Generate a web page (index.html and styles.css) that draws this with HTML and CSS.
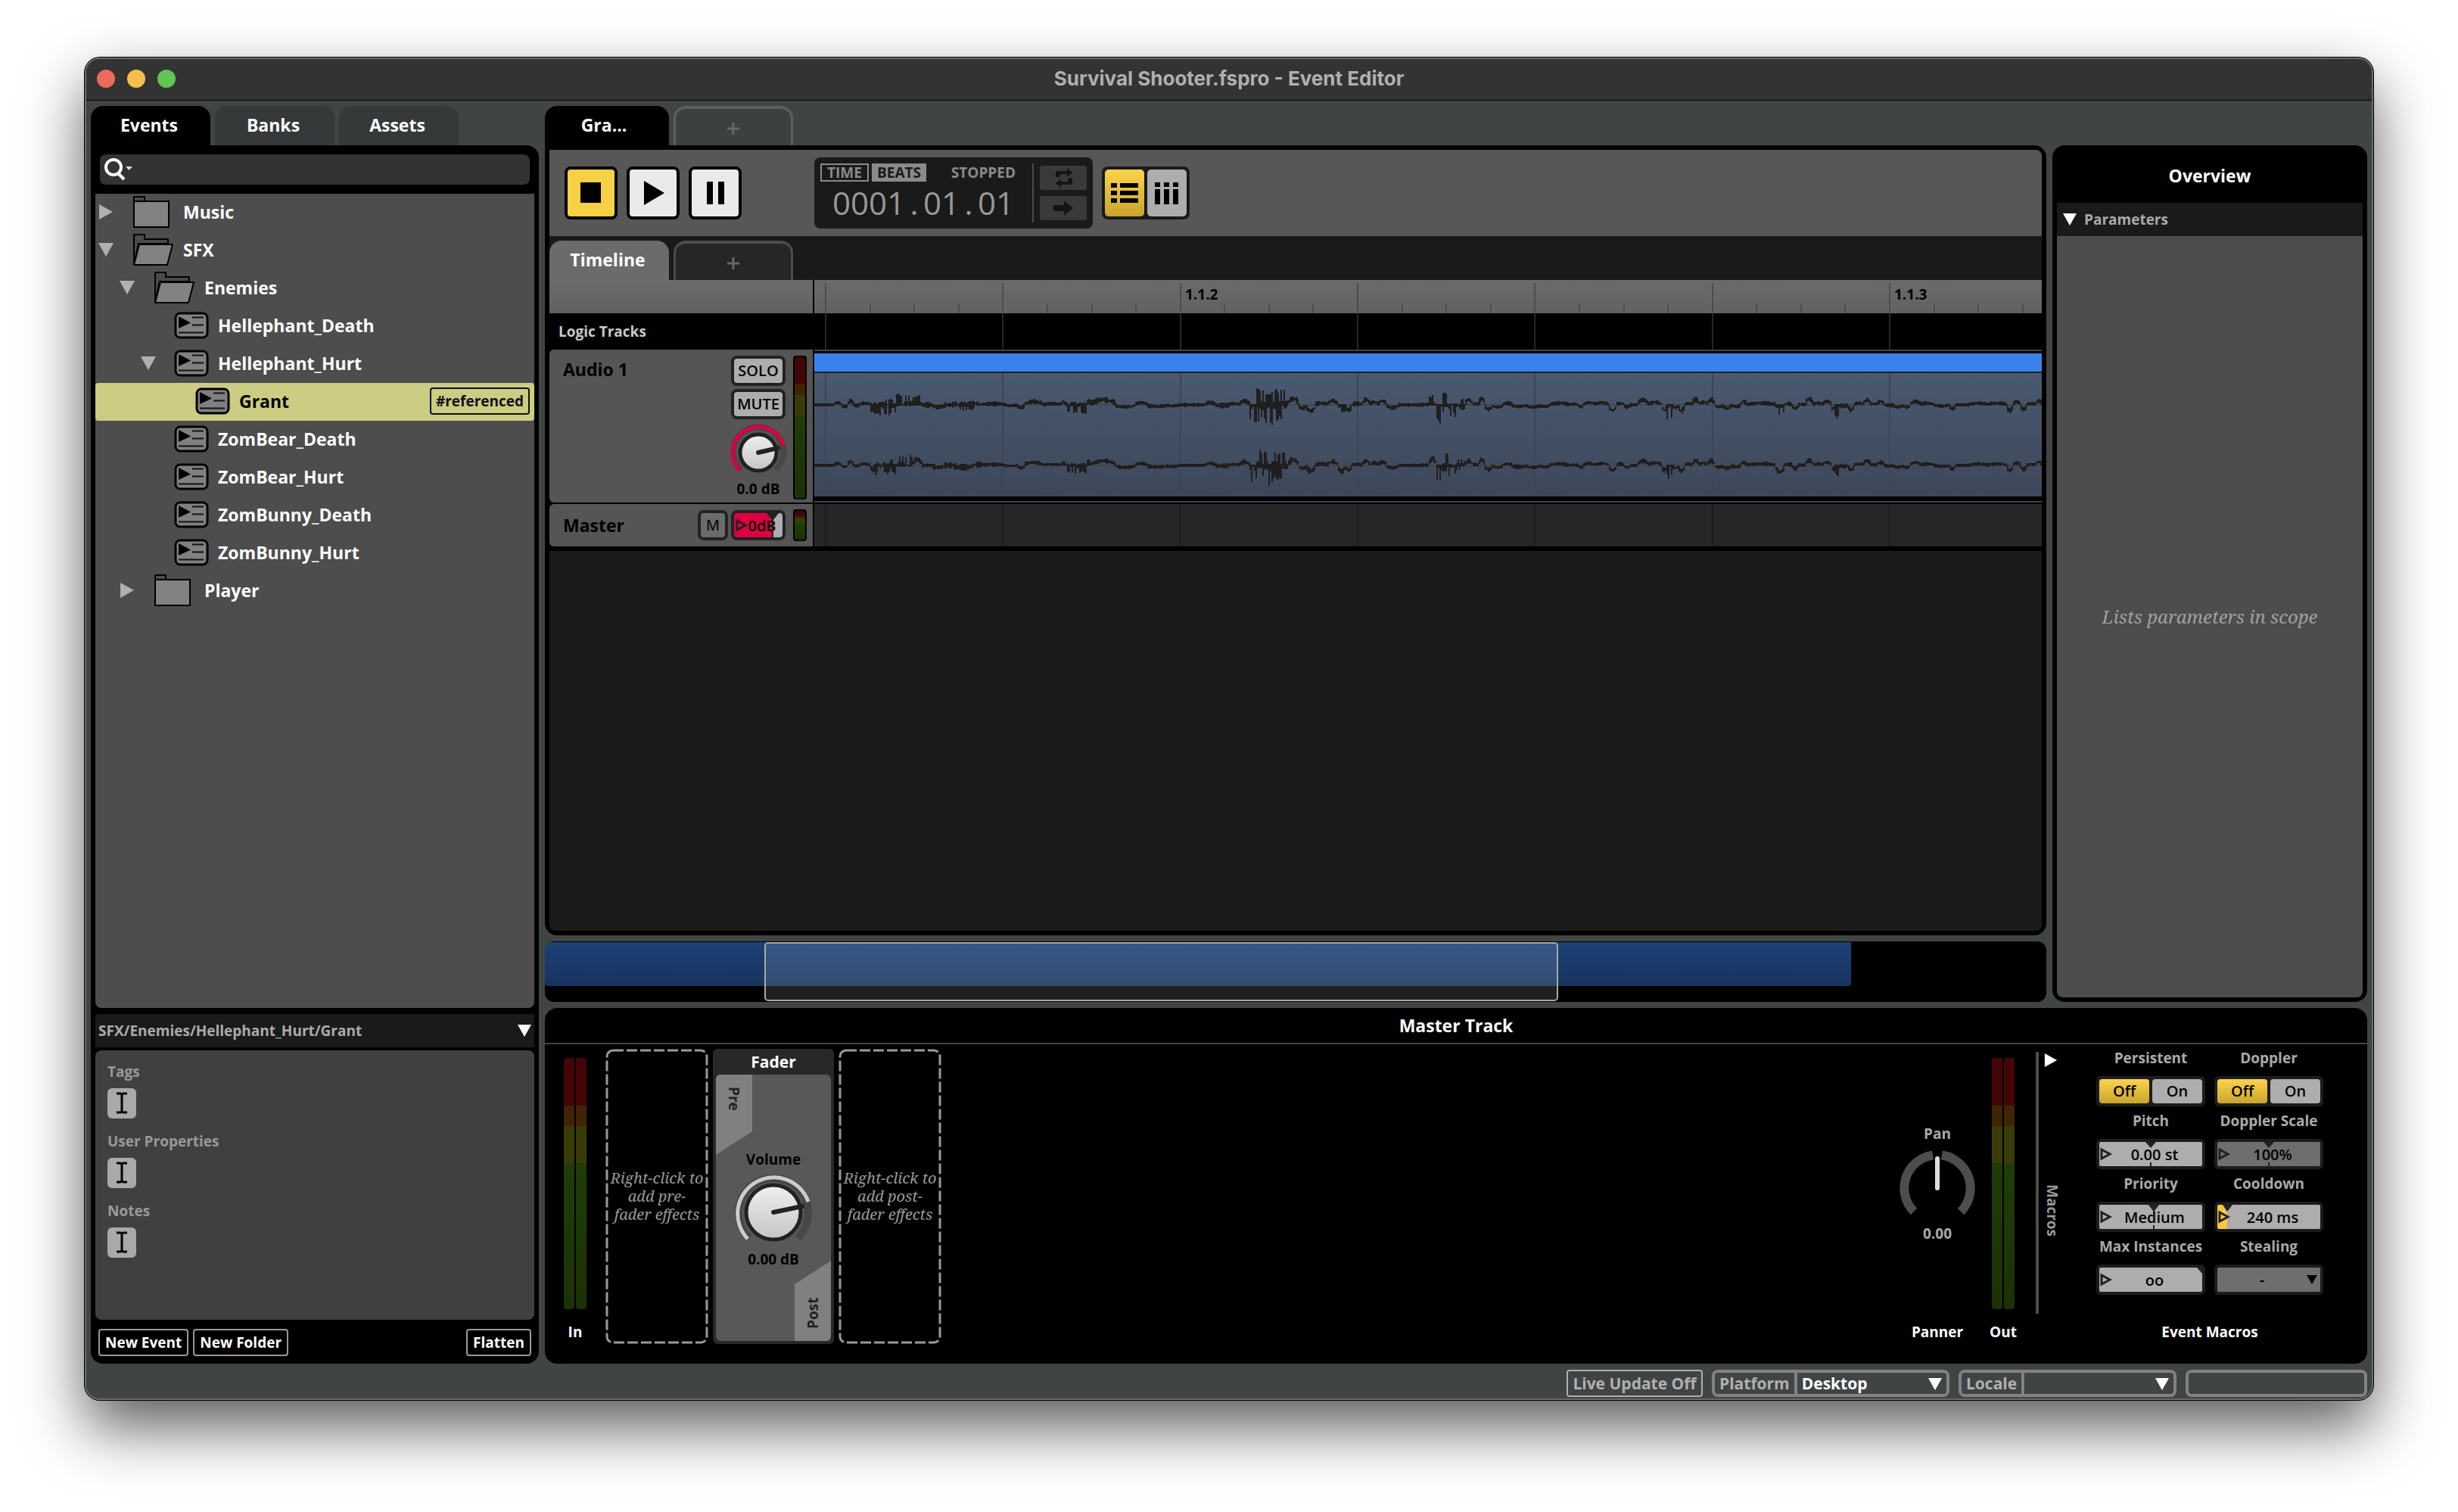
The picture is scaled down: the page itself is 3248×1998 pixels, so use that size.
FILE: index.html
```html
<!DOCTYPE html>
<html lang="en">
<head>
<meta charset="utf-8">
<title>Survival Shooter.fspro - Event Editor</title>
<link rel="stylesheet" href="styles.css">
</head>
<body>
<svg class="defs" aria-hidden="true">
  <defs>
    <linearGradient id="cap" x1="0" y1="0" x2="0" y2="1"><stop offset="0" stop-color="#f0f0f0"/><stop offset="1" stop-color="#c4c4c4"/></linearGradient>
    <symbol id="folder" viewBox="0 0 57 44">
      <path d="M3 42V2h14v6" fill="#4a4a4a" stroke="#000" stroke-width="2"/>
      <path d="M3 8h46v34H3z" fill="#828282" stroke="#000" stroke-width="2"/>
    </symbol>
    <symbol id="folder-open" viewBox="0 0 57 44">
      <path d="M3 41V2h14v6h31v6H9L3 41z" fill="#4a4a4a" stroke="#000" stroke-width="2" stroke-linejoin="round"/>
      <path d="M10 15h44l-7 27H3z" fill="#828282" stroke="#000" stroke-width="2" stroke-linejoin="round"/>
    </symbol>
    <symbol id="event" viewBox="0 0 47 36">
      <rect x="2" y="2" width="42" height="32" rx="6" fill="#808080" stroke="#000" stroke-width="3"/>
      <path d="M6 6l16 8.500L6 22z" fill="#000"/>
      <path d="M24 7.500h15M24 17.500h15M6 27.500h33" stroke="#111" stroke-width="2"/>
    </symbol>
    <symbol id="right" viewBox="0 0 20 20"><path d="M1 0v20l18-10z" fill="currentColor"/></symbol>
    <symbol id="down" viewBox="0 0 20 20"><path d="M0 1h20L10 19z" fill="currentColor"/></symbol>
    <symbol id="ibeam" viewBox="0 0 38 40"><path d="M12 7h5l2 1 2-1h5M19 8v23M12 32h5l2-1 2 1h5" fill="none" stroke="#000" stroke-width="3"/></symbol>
    <symbol id="expand" viewBox="0 0 16 20"><path d="M2 4v12l11-6z" fill="none" stroke="#222" stroke-width="3"/></symbol>
    <path id="majors" d="M15 0V400M249 0V400M484 0V400M718 0V400M952 0V400M1187 0V400M1421 0V400" stroke="currentColor" stroke-width="2"/>
    <path id="minors" d="M74 32V44M132 32V44M191 32V44M308 32V44M367 32V44M425 32V44M542 32V44M601 32V44M659 32V44M777 32V44M835 32V44M894 32V44M1011 32V44M1070 32V44M1128 32V44M1245 32V44M1304 32V44M1362 32V44M1480 32V44M1538 32V44M1597 32V44" stroke="currentColor" stroke-width="2"/>
  </defs>
</svg>

<div class="window">
  <header class="titlebar">
    <div class="lights"><button class="light close" aria-label="Close"></button><button class="light minimise" aria-label="Minimise"></button><button class="light zoom" aria-label="Zoom"></button></div>
    <h1>Survival Shooter.fspro - Event Editor</h1>
  </header>

  <main class="workspace">
    <aside class="browser">
      <nav class="tabs">
        <button class="tab active">Events</button><button class="tab idle">Banks</button><button class="tab idle">Assets</button>
      </nav>
      <div class="browser-panel">
        <div class="search">
          <svg width="40" height="32" viewBox="0 0 40 32"><circle cx="14" cy="13" r="10" fill="none" stroke="#fff" stroke-width="4"/><path d="M20 21l8 8" stroke="#fff" stroke-width="4"/><path d="M30 12h9l-4.500 5z" fill="#ddd"/></svg>
          <input type="search" aria-label="Search events">
        </div>
        <ul class="tree">
          <li class="row l0"><svg class="arrow"><use href="#right"/></svg><svg class="ico-folder"><use href="#folder"/></svg><span>Music</span></li>
          <li class="row l0"><svg class="arrow"><use href="#down"/></svg><svg class="ico-folder"><use href="#folder-open"/></svg><span>SFX</span></li>
          <li class="row l1"><svg class="arrow"><use href="#down"/></svg><svg class="ico-folder"><use href="#folder-open"/></svg><span>Enemies</span></li>
          <li class="row l2"><svg class="arrow"></svg><svg class="ico-event"><use href="#event"/></svg><span>Hellephant_Death</span></li>
          <li class="row l2"><svg class="arrow"><use href="#down"/></svg><svg class="ico-event"><use href="#event"/></svg><span>Hellephant_Hurt</span></li>
          <li class="row l3 selected"><svg class="arrow"></svg><svg class="ico-event"><use href="#event"/></svg><span>Grant</span><span class="tag">#referenced</span></li>
          <li class="row l2"><svg class="arrow"></svg><svg class="ico-event"><use href="#event"/></svg><span>ZomBear_Death</span></li>
          <li class="row l2"><svg class="arrow"></svg><svg class="ico-event"><use href="#event"/></svg><span>ZomBear_Hurt</span></li>
          <li class="row l2"><svg class="arrow"></svg><svg class="ico-event"><use href="#event"/></svg><span>ZomBunny_Death</span></li>
          <li class="row l2"><svg class="arrow"></svg><svg class="ico-event"><use href="#event"/></svg><span>ZomBunny_Hurt</span></li>
          <li class="row l1"><svg class="arrow"><use href="#right"/></svg><svg class="ico-folder"><use href="#folder"/></svg><span>Player</span></li>
        </ul>
        <div class="pathbar"><span>SFX/Enemies/Hellephant_Hurt/Grant</span><svg class="tri"><use href="#down"/></svg></div>
        <section class="props">
          <h2>Tags</h2><button class="edit" aria-label="Edit tags"><svg width="38" height="40"><use href="#ibeam"/></svg></button>
          <h2>User Properties</h2><button class="edit" aria-label="Edit user properties"><svg width="38" height="40"><use href="#ibeam"/></svg></button>
          <h2>Notes</h2><button class="edit" aria-label="Edit notes"><svg width="38" height="40"><use href="#ibeam"/></svg></button>
        </section>
        <div class="browser-actions"><button class="outline">New Event</button><button class="outline">New Folder</button><button class="outline last">Flatten</button></div>
      </div>
    </aside>

    <div class="right-side">
      <div class="upper">
        <section class="editor">
          <nav class="tabs"><button class="tab active doc">Gra...</button><button class="tab add" aria-label="New tab"><svg width="18" height="18" viewBox="0 0 18 18"><path d="M9 1v16M1 9h16" stroke="currentColor" stroke-width="3"/></svg></button></nav>
          <div class="editor-panel">
            <div class="toolbar">
              <div class="transport">
                <button class="big on" aria-label="Stop"><svg width="62" height="62"><rect x="17" y="17" width="27" height="27"/></svg></button>
                <button class="big" aria-label="Play"><svg width="62" height="62"><path d="M19 15v32l27-16z"/></svg></button>
                <button class="big" aria-label="Pause"><svg width="62" height="62"><path d="M20 16h8v30h-8zM35 16h8v30h-8z"/></svg></button>
              </div>
              <div class="clock">
                <div class="readout">
                  <div class="modes"><button class="mode">TIME</button><button class="mode filled">BEATS</button><span class="state">STOPPED</span></div>
                  <div class="digits">0001<i>.</i>01<i>.</i>01</div>
                </div>
                <div class="clock-buttons">
                  <button aria-label="Loop"><svg width="62" height="32" viewBox="0 0 62 32"><path d="M21 15V9q0-2 2-2h13V3l7 6-7 6v-4H27v1q0 3-2 3zM43 16v6q0 3-2 3H28v4l-7-6 7-6v4h9v-1q0-4 2-4z" fill="#151515"/></svg></button>
                  <button aria-label="Follow playback"><svg width="62" height="32" viewBox="0 0 62 32"><path d="M18 12h14V6l12 10-12 10v-6H18z" fill="#151515"/></svg></button>
                </div>
              </div>
              <div class="views">
                <button class="on" aria-label="Track view"><svg width="52" height="62"><path d="M8 18h8v6H8zM20 18h24v6H20zM8 28h8v6H8zM20 28h24v6H20zM8 38h8v6H8zM20 38h24v6H20z"/></svg></button>
                <button aria-label="Mixer view"><svg width="52" height="62"><path d="M10 17h7v6h-7zM22 17h7v6h-7zM34 17h7v6h-7zM10 26h7v20h-7zM22 26h7v20h-7zM34 26h7v20h-7z"/></svg></button>
              </div>
            </div>
            <nav class="tabs sheet-tabs"><button class="tab sheet">Timeline</button><button class="tab add dark" aria-label="New sheet"><svg width="18" height="18" viewBox="0 0 18 18"><path d="M9 1v16M1 9h16" stroke="currentColor" stroke-width="3"/></svg></button></nav>
            <div class="line ruler">
              <div class="head"></div>
              <div class="lane"><svg class="grid"><g transform="translate(0 4)"><use href="#majors"/></g><use href="#minors"/><text x="490" y="26">1.1.2</text><text x="1427" y="26">1.1.3</text></svg></div>
            </div>
            <div class="line logic"><div class="head">Logic Tracks</div><div class="lane"><svg class="grid"><use href="#majors"/></svg></div></div>
            <div class="line audio">
              <div class="head">
                <span class="name">Audio 1</span>
                <div class="strip">
                  <button class="key">SOLO</button><button class="key">MUTE</button>
                  <svg class="knob" width="76" height="72" viewBox="-38 -38 76 72" role="img" aria-label="Volume">
                    <path d="M-23 23A33 33 0 1 1 23 23" fill="none" stroke="#474747" stroke-width="8"/>
                    <path d="M-24 24A34 34 0 1 1 33 -9" fill="none" stroke="#dc0041" stroke-width="5"/>
                    <circle r="24" fill="url(#cap)" stroke="#222" stroke-width="5"/><path d="M0 0L26-6" stroke="#222" stroke-width="6" stroke-linecap="round"/>
                  </svg>
                  <output>0.0 dB</output>
                </div>
                <div class="meter framed"></div>
              </div>
              <div class="lane">
                <div class="clip"><div class="clip-bar"></div><div class="clip-body"><svg class="grid"><use href="#majors"/></svg><svg class="wave" viewBox="0 0 1622 163" preserveAspectRatio="none"></svg></div></div>
              </div>
            </div>
            <div class="line master">
              <div class="head">
                <span class="name">Master</span>
                <button class="key mute">M</button>
                <div class="field small"><input type="text" value="0dB" aria-label="Master volume"><svg class="mark" width="64" height="32"><path d="M43 0h16l-7 9v23h-2v-23z" fill="#222"/><use href="#expand" x="2" y="6" width="16" height="20"/></svg></div>
                <div class="meter framed"></div>
              </div>
              <div class="lane"><svg class="grid"><use href="#majors"/></svg></div>
            </div>
            <div class="canvas"></div>
          </div>
          <div class="minimap"><div class="extent"></div><div class="view"></div></div>
        </section>

        <aside class="overview">
          <h2>Overview</h2>
          <div class="params"><svg class="tri"><use href="#down"/></svg><span>Parameters</span></div>
          <div class="scope">Lists parameters in scope</div>
        </aside>
      </div>

      <section class="deck">
        <h2>Master Track</h2>
        <div class="chain">
          <div class="io in"><div class="pair"><div class="meter"></div><div class="meter"></div></div><span>In</span></div>
          <div class="slot"><svg><rect x="2" y="2" width="132" height="386" rx="8"/></svg><p>Right-click to<br>add pre-<br>fader effects</p></div>
          <div class="fader">
            <h3>Fader</h3>
            <div class="fader-body">
              <span class="corner pre">Pre</span>
              <label>Volume</label>
              <svg width="104" height="96" viewBox="-52 -52 104 96" role="img" aria-label="Fader volume">
                <path d="M-32 34A46 46 0 1 1 32 34" fill="none" stroke="#474747" stroke-width="10"/>
                <path d="M-34 35A48 48 0 1 1 46 -14" fill="none" stroke="#ccc" stroke-width="5"/>
                <circle r="36" fill="url(#cap)" stroke="#222" stroke-width="5"/><path d="M0 0L38-8" stroke="#222" stroke-width="6" stroke-linecap="round"/>
              </svg>
              <output>0.00 dB</output>
              <span class="corner post">Post</span>
            </div>
          </div>
          <div class="slot"><svg><rect x="2" y="2" width="132" height="386" rx="8"/></svg><p>Right-click to<br>add post-<br>fader effects</p></div>
          <div class="io panner">
            <div class="pan"><label>Pan</label>
              <svg width="104" height="96" viewBox="-52 -54 104 96" role="img" aria-label="Pan"><path d="M-31 31A44 44 0 0 1 -6 -43.500M6 -43.500A44 44 0 0 1 31 31" fill="none" stroke="#4d4d4d" stroke-width="12"/><path d="M0-39V0" stroke="#ddd" stroke-width="6" stroke-linecap="round"/></svg>
              <output>0.00</output></div>
            <span>Panner</span>
          </div>
          <div class="io out"><div class="pair"><div class="meter"></div><div class="meter"></div></div><span>Out</span></div>
          <div class="drawer"><svg class="tri"><use href="#right"/></svg><span>Macros</span></div>
          <div class="macros">
            <div class="macro-grid">
              <div class="macro"><label>Persistent</label><div class="switch"><button class="on">Off</button><button>On</button></div></div>
              <div class="macro"><label>Doppler</label><div class="switch"><button class="on">Off</button><button>On</button></div></div>
              <div class="macro"><label for="pitch">Pitch</label><div class="field"><input id="pitch" type="text" value="0.00 st"><svg class="mark" width="136" height="32"><path d="M61 0h14l-7 8zM67 27h2v5h-2z" fill="#222"/><use href="#expand" x="1" y="6" width="16" height="20"/></svg></div></div>
              <div class="macro"><label for="dscale">Doppler Scale</label><div class="field off"><input id="dscale" type="text" value="100%"><svg class="mark" width="136" height="32"><path d="M61 0h14l-7 8zM67 27h2v5h-2z" fill="#222"/><use href="#expand" x="1" y="6" width="16" height="20"/></svg></div></div>
              <div class="macro"><label for="priority">Priority</label><div class="field"><input id="priority" type="text" value="Medium"><svg class="mark" width="136" height="32"><path d="M65 0h14l-6 8v14h-2V8zM71 27h2v5h-2z" fill="#222"/><use href="#expand" x="1" y="6" width="16" height="20"/></svg></div></div>
              <div class="macro"><label for="cooldown">Cooldown</label><div class="field cool"><input id="cooldown" type="text" value="240 ms"><svg class="mark" width="136" height="32"><path d="M7 0h13l-7 9z" fill="#222"/><use href="#expand" x="1" y="6" width="16" height="20"/></svg></div></div>
              <div class="macro"><label for="maxinst">Max Instances</label><div class="field"><input id="maxinst" type="text" value="oo"><svg class="mark" width="136" height="32"><path d="M129 0h7v8z" fill="#222"/><use href="#expand" x="1" y="6" width="16" height="20"/></svg></div></div>
              <div class="macro"><label for="stealing">Stealing</label><div class="field off"><select id="stealing"><option>-</option></select><svg class="mark" width="136" height="32"><path d="M118 10h14l-7 12z"/></svg></div></div>
            </div>
            <span>Event Macros</span>
          </div>
        </div>
      </section>
    </div>
  </main>

  <footer class="status">
    <button class="live">Live Update Off</button>
    <div class="picker platform"><label for="platform">Platform</label><select id="platform"><option>Desktop</option></select><svg class="tri"><use href="#down"/></svg></div>
    <div class="picker locale"><label for="locale">Locale</label><select id="locale"><option></option></select><svg class="tri"><use href="#down"/></svg></div>
    <div class="picker blank"></div>
  </footer>
</div>
<script src="wave.js"></script>
</body>
</html>
```
FILE: styles.css
```css
* { box-sizing: border-box; }
body {
  margin: 0; min-height: 100vh; padding: 76px 112px 148px; background: #fff;
  display: flex; font: 700 19px/28px "Open Sans", "Noto Sans", sans-serif; color: #fff;
}
button, input, select { font: inherit; color: inherit; margin: 0; padding: 0; border: 0; background: none; border-radius: 0; appearance: none; outline: 0; }
h1, h2, h3, p, ul { margin: 0; padding: 0; font-size: inherit; font-weight: inherit; list-style: none; }
svg { display: block; flex: none; }
.defs { position: absolute; width: 0; height: 0; }

.window {
  flex: 1; min-width: 0; display: flex; flex-direction: column; background: #404444;
  border: 2px solid #686c6c; border-radius: 20px; overflow: hidden;
  box-shadow: 0 0 0 1px #000, 0 36px 80px rgba(0, 0, 0, .64);
}
.titlebar { height: 55px; flex: none; display: grid; grid-template-columns: 1fr auto 1fr; align-items: center; background: #333; border-bottom: 1px solid #000; padding-bottom: 2px; }
.titlebar h1 { font: 700 26px/32px Inter, sans-serif; color: #b0b0b0; }
.lights { display: flex; gap: 16px; padding-left: 14px; }
.light { width: 24px; height: 24px; border-radius: 50%; }
.close { background: #ed6a5e; }
.minimise { background: #f4bf4f; }
.zoom { background: #61c554; }

.workspace { flex: 1; min-height: 0; display: grid; grid-template-columns: 592px minmax(0, 1fr); gap: 8px; padding: 7px 6px 0; }

.tabs { display: flex; gap: 6px; height: 52px; flex: none; font-size: 23px; }
.tab { width: 158px; height: 52px; border-radius: 16px 16px 0 0; display: grid; place-items: center; padding: 0 4px 2px 0; }
.tab.active { background: #000; }
.tab.idle { background: #353939; }
.tab.doc { width: 164px; padding-right: 8px; }
.tab.add { border: 3px solid #5d6060; border-top-width: 4px; border-bottom: 0; color: #666; background: #3c4040; padding: 4px 0 0; }
.tab.add.dark { border-color: #4d4d4d; background: #262626; }
.tab.sheet { background: #6b6b6b; }

.browser { display: flex; flex-direction: column; min-height: 0; }
.browser-panel { flex: 1; display: flex; flex-direction: column; background: #000; border-radius: 0 16px 16px 16px; padding: 12px 6px 10px; }
.search { display: flex; align-items: center; height: 40px; margin: 0 6px; padding-left: 4px; background: #333; border-radius: 8px; }
.search input { flex: 1; min-width: 0; height: 40px; padding: 0 8px; }
.tree { flex: 1; margin-top: 12px; background: #4d4d4d; border-radius: 0 0 8px 8px; font-size: 23px; }
.row { display: flex; align-items: center; height: 50px; padding: 0 6px 2px 4px; border-radius: 4px; }
.l1 { padding-left: 32px; }
.l2 { padding-left: 60px; }
.l3 { padding-left: 88px; }
.arrow { width: 20px; height: 20px; margin-right: 24px; color: #b0b0b0; }
.ico-folder { width: 57px; height: 44px; margin-right: 11px; }
.ico-event { width: 47px; height: 36px; margin-right: 11px; }
.selected { background: #cccc83; color: #000; }
.tag { margin-left: auto; border: 2px solid #111; border-radius: 4px; padding: 0 6px; font-size: 19px; line-height: 32px; color: #111; }
.pathbar { display: flex; align-items: center; justify-content: space-between; height: 44px; margin-top: 8px; padding: 0 4px; background: #1a1a1a; color: #aaa; }
.tri { width: 18px; height: 18px; color: #fff; }
.props { height: 356px; margin-top: 4px; padding: 14px 16px; background: #404040; border-radius: 8px; color: #999; }
.edit { display: block; width: 38px; height: 40px; margin: 8px 0 16px; border-radius: 6px; background: #a9a9a9; }
.browser-actions { display: flex; gap: 6px; margin: 12px 4px 0; }
.outline { height: 36px; padding: 0 7px; border: 2px solid #999; border-radius: 4px; line-height: 32px; }
.outline.last { margin-left: auto; }

.right-side { display: flex; flex-direction: column; gap: 8px; min-height: 0; }
.upper { flex: 1; min-height: 0; display: grid; grid-template-columns: minmax(0, 1fr) 416px; gap: 8px; }
.editor { display: flex; flex-direction: column; min-height: 0; }
.editor-panel { flex: 1; min-height: 0; display: flex; flex-direction: column; background: #000; border-radius: 0 16px 16px 16px; padding: 6px; }
.toolbar { display: flex; align-items: center; height: 114px; flex: none; padding-left: 20px; background: #575757; border-radius: 0 8px 0 0; }
.transport { display: flex; gap: 12px; }
.big { width: 70px; height: 70px; border: 4px solid #000; border-radius: 8px; background: #eaeaea; }
.big.on { background: #f8d045; }
.clock { display: flex; width: 368px; height: 94px; margin: 0 12px 0 96px; padding: 8px; background: #1a1a1a; border-radius: 8px; color: #8a8a8a; }
.readout { width: 282px; border-right: 2px solid #4a4a4a; }
.modes { display: flex; gap: 4px; height: 24px; line-height: 20px; }
.mode { width: 64px; border: 2px solid #8a8a8a; }
.mode.filled { width: 72px; background: #8a8a8a; color: #1a1a1a; }
.state { margin: 2px 22px 0 auto; }
.digits { font-size: 42px; line-height: 56px; font-weight: 400; padding-left: 16px; color: #999; }
.digits i { display: inline-block; width: 24px; text-align: center; font-style: normal; }
.clock-buttons { display: grid; gap: 8px; align-content: center; padding-left: 8px; }
.clock-buttons button { width: 62px; height: 32px; background: #3a3a3a; border-radius: 3px; }
.views { display: flex; gap: 4px; height: 70px; padding: 4px; background: #1a1a1a; border-radius: 8px; }
.views button { width: 52px; border-radius: 5px; background: #adadad; }
.views .on, .switch .on { background: linear-gradient(#fbd34c, #c9a52d); }
.sheet-tabs { height: 58px; padding-top: 6px; background: #1a1a1a; }

.line { display: grid; grid-template-columns: 348px minmax(0, 1fr); column-gap: 2px; flex: none; color: #000; }
.lane { position: relative; min-width: 0; }
.grid { position: absolute; left: 0; top: 0; width: 100%; height: 100%; overflow: hidden; color: #262626; }
.ruler { height: 44px; }
.ruler .head, .ruler .lane { background: linear-gradient(#6b6b6b, #616161); }
.ruler .grid { color: #4d4d4d; }
.ruler text { fill: #000; }
.logic { height: 48px; }
.logic .head { color: #c8c8c8; padding: 10px 12px; }
.audio { height: 200px; margin-bottom: 4px; }
.audio .head, .master .head { display: flex; background: #555; border-radius: 6px 0 0 6px; padding: 8px 8px 4px 18px; }
.name { flex: 1; font-size: 23px; line-height: 36px; }
.strip { width: 76px; margin-right: 8px; display: flex; flex-direction: column; align-items: center; }
.key { width: 72px; height: 40px; margin-bottom: 4px; border: 4px solid #222; border-radius: 8px; background: #adadad; font-size: 20px; font-weight: 600; line-height: 32px; }
.knob { margin-top: 2px; }
.strip output { line-height: 28px; }
.meter { background: linear-gradient(#440508 19%, #402408 19% 27%, #3a3c08 27% 42%, #203c08 42%, #1c3206); }
.meter.framed { width: 18px; border: 2px solid #000; border-radius: 4px; }
.audio .lane { border: solid #444; border-width: 2px 0; background: #000; padding: 3px 0 4px; }
.clip { height: 189px; display: flex; flex-direction: column; }
.clip-bar { height: 26px; flex: none; background: #3a82eb; border-bottom: 2px solid #222; }
.clip-body { position: relative; flex: 1; background: linear-gradient(#49596f, #3d475a); }
.clip-body .grid { color: #3a4659; }
.wave { position: absolute; left: 0; top: 0; width: 100%; height: 100%; }
.master { height: 56px; margin-bottom: 6px; }
.master .head { align-items: center; padding: 6px 8px 6px 18px; }
.master .lane { background: #262626; }
.master .grid { color: #1c1c1c; }
.master .mute { width: 40px; margin: 0 4px 0 0; background: #6b6b6b; color: #111; }
.master .meter { height: 42px; margin-left: 10px; }
.canvas { flex: 1; background: #1a1a1a; border-radius: 0 0 8px 8px; }

.minimap { position: relative; height: 80px; flex: none; margin-top: 8px; background: #000; border-radius: 12px; overflow: hidden; }
.extent { width: 87%; height: 58px; margin-top: 1px; background: linear-gradient(#1c4077, #18335e); border-radius: 0 0 4px 4px; }
.view { position: absolute; left: 290px; top: 1px; bottom: 1px; width: 1049px; border: 2px solid #a8a8a8; border-radius: 5px; background: rgba(255, 255, 255, .12); }

.overview { margin-top: 52px; display: flex; flex-direction: column; background: #000; border-radius: 16px; padding: 0 6px 6px; }
.overview h2 { height: 76px; line-height: 80px; text-align: center; font-size: 23px; }
.params { display: flex; align-items: center; gap: 10px; height: 44px; padding-left: 8px; background: #1a1a1a; color: #aaa; }
.scope { flex: 1; display: grid; place-items: center; background: #4d4d4d; border-radius: 0 0 8px 8px; color: #a0a0a0; font: italic 400 24px/32px "Noto Serif", "Droid Serif", "Liberation Serif", serif; }

.deck { height: 470px; flex: none; background: #000; border-radius: 16px; }
.deck h2 { height: 48px; line-height: 46px; text-align: center; border-bottom: 2px solid #444; font-size: 23px; }
.chain { display: flex; height: 390px; margin-top: 6px; }
.io { display: flex; flex-direction: column; align-items: center; justify-content: space-between; padding-bottom: 2px; }
.pair { display: flex; gap: 2px; margin-top: 12px; }
.pair .meter { width: 14px; height: 332px; border-radius: 4px; }
.in { width: 80px; }
.slot { position: relative; width: 136px; display: grid; place-items: center; }
.slot svg { position: absolute; left: 0; top: 0; width: 100%; height: 100%; }
.slot rect { fill: none; stroke: #999; stroke-width: 3; stroke-dasharray: 14 4; }
.slot p { text-align: center; color: #999; font: italic 400 20px/24px "Noto Serif", "Droid Serif", "Liberation Serif", serif; }
.fader { width: 160px; margin: 0 6px; padding: 0 4px 4px; background: #282828; border-radius: 6px; display: flex; flex-direction: column; }
.fader h3 { height: 34px; line-height: 34px; text-align: center; font-size: 21px; }
.fader-body { position: relative; flex: 1; display: flex; flex-direction: column; align-items: center; justify-content: center; color: #000; background: #585858; border-radius: 6px; overflow: hidden; gap: 4px; padding-top: 4px; }
.corner { position: absolute; width: 48px; height: 106px; background: #808080; color: #222; writing-mode: vertical-rl; line-height: 48px; padding-top: 16px; }
.pre { left: 0; top: 0; clip-path: polygon(0 0, 100% 0, 100% 75px, 0 100%); }
.post { right: 0; bottom: 0; transform: rotate(180deg); clip-path: polygon(0 0, 100% 0, 100% 75px, 0 100%); }
.panner { width: 104px; margin-left: auto; }
.pan { display: flex; flex-direction: column; align-items: center; gap: 4px; padding-top: 98px; color: #aaa; }
.out { width: 70px; }
.drawer { width: 32px; margin: 4px 0 40px 8px; padding-left: 7px; border-left: 4px solid #4d4d4d; display: flex; flex-direction: column; color: #999; }
.drawer .tri { margin-top: 2px; }
.drawer span { writing-mode: vertical-rl; line-height: 20px; margin: auto 0; padding-top: 52px; }
.macros { width: 300px; margin: 0 58px 0 48px; display: flex; flex-direction: column; align-items: center; justify-content: space-between; padding-bottom: 2px; }
.macro-grid { display: grid; grid-template-columns: 144px 144px; gap: 7px 12px; }
.macro { display: flex; flex-direction: column; align-items: center; color: #aaa; white-space: nowrap; }
.macro label { line-height: 24px; height: 36px; }
.macro .field, .macro .switch { width: 144px; height: 40px; }
.switch { display: flex; gap: 4px; padding: 4px; background: #1c1c1c; border-radius: 6px; color: #000; font-size: 20px; font-weight: 600; }
.switch button { flex: 1; border-radius: 4px; background: #adadad; line-height: 28px; }
.field { position: relative; border: 4px solid #1c1c1c; border-radius: 6px; background: #adadad; color: #000; font-size: 20px; font-weight: 600; }
.field input, .field select { width: 100%; height: 32px; text-align: center; text-align-last: center; padding-left: 10px; display: block; border-radius: 4px; }
.field select { padding: 0 18px 0 0; }
.field.off { background: #6e6e6e; }
.field.cool { background: linear-gradient(90deg, #fcc544 13px, #adadad 13px); }
.field.small { width: 72px; height: 40px; border-color: #222; border-radius: 8px; background: linear-gradient(90deg, #dc0041 51px, #adadad 51px); }
.mark { position: absolute; left: 0; top: 0; pointer-events: none; }

.status { display: flex; justify-content: flex-end; gap: 12px; padding: 8px 6px 2px; flex: none; height: 46px; font-size: 21px; color: #b0b0b0; }
.live { height: 36px; width: 180px; border: 2px solid #b0b0b0; border-radius: 4px; line-height: 30px; }
.picker { position: relative; display: flex; height: 36px; border: 4px solid #828282; border-radius: 8px; line-height: 28px; }
.picker label { padding: 0 6px; border-right: 4px solid #828282; }
.picker select { flex: 1; min-width: 0; padding: 0 32px 0 6px; color: #fff; }
.picker .tri { position: absolute; right: 6px; top: 6px; pointer-events: none; }
.platform { width: 314px; }
.locale { width: 288px; }
.blank { width: 240px; }
```
FILE: wave.js
```javascript
// Envelope of the clip: [start x, highest, lowest] in pixels around the centre line.
const envelope = [
  [0,-1,1],[26,-4,0],[36,-1,4],[44,-7,0],[52,-2,3],[60,-4,1],[74,-2,10],[80,-3,13],[94,-8,13],[104,-2,15],[108,-15,1],
  [130,-12,0],[142,-5,5],[156,-2,6],[172,-5,5],[184,-4,8],[210,-6,4],[220,-4,2],[252,-1,2],[268,0,5],[278,-6,0],
  [302,-3,1],[326,-6,1],[332,-3,11],[360,-8,2],[366,-9,0],[398,-1,5],[424,-4,0],[440,-1,4],[466,-2,4],[482,-2,2],
  [516,-5,1],[530,-4,5],[548,-3,1],[562,-7,0],[575,0,27],[584,-23,22],[596,-18,29],[606,-20,20],[618,-21,5],[626,-11,0],
  [640,0,6],[650,0,11],[662,-5,2],[678,-7,0],[692,0,12],[702,0,9],[710,-4,2],[724,-9,0],[734,-5,0],[746,-7,0],[756,0,5],
  [772,-2,2],[804,-3,2],[812,-13,0],[822,0,27],[830,-17,9],[838,-1,15],[848,-8,6],[860,-9,0],[870,-3,1],[878,-11,0],
  [886,0,8],[896,0,4],[910,-5,2],[922,-2,5],[940,0,4],[960,-1,4],[972,-4,1],[996,-2,1],[1010,-1,5],[1016,-4,0],
  [1032,-4,0],[1050,0,10],[1060,-4,1],[1070,0,4],[1078,-2,2],[1088,-9,0],[1102,-5,0],[1120,0,10],[1126,0,19],
  [1134,0,5],[1142,0,11],[1150,-4,1],[1160,-9,0],[1170,-5,0],[1180,-9,0],[1190,0,4],[1200,0,6],[1212,-1,4],[1224,-6,0],
  [1232,-4,1],[1270,0,13],[1282,-4,2],[1292,0,6],[1300,-3,2],[1310,-10,0],[1320,-4,1],[1332,-6,0],[1344,0,8],[1348,0,17],
  [1356,-2,4],[1366,0,9],[1374,-4,1],[1386,-9,0],[1396,-3,1],[1404,-6,0],[1414,-2,3],[1426,0,4],[1438,0,4],[1448,-6,0],
  [1462,-4,1],[1480,-1,3],[1500,0,7],[1508,-2,2],[1526,-4,1],[1550,-4,1],[1576,0,10],[1584,-6,1],[1594,0,8],[1602,-3,1],
  [1614,-7,0],[1622,0,0]
];
let seed = 7;
const random = () => (seed = (seed * 16807) % 2147483647) / 2147483647;
const channel = (centre, scale) => {
  let path = "";
  for (let i = 0; i < envelope.length - 1; i++) {
    const [start, high, low] = envelope[i], end = envelope[i + 1][0];
    const range = (low - high) * scale, thin = range < 12;
    for (let x = start; x < end; x += 2) {
      // Quiet parts drift as one short stroke; loud parts alternate long and short strokes.
      const swell = Math.sin(Math.PI * (x - start + 1) / (end - start));
      let top, bottom;
      if (thin) {
        const middle = (high + low) / 2 * scale * (.5 + swell);
        const half = 1.500 + range * .3 * random();
        top = Math.round(middle - half);
        bottom = Math.round(middle + half);
      } else {
        top = Math.round(high * scale * (random() < .6 ? .7 + .3 * random() : .3 * random())) - 1;
        bottom = Math.round(low * scale * (random() < .6 ? .6 + .4 * random() : .3 * random())) + 1;
      }
      path += `M${x} ${centre + top}h2v${bottom - top}h-2z`;
    }
  }
  return path;
};
document.querySelector(".wave").innerHTML =
  `<path d="M0 41h1622v2H0zM0 121h1622v2H0z" fill="#454545"/>` +
  `<path d="${channel(42, 1)}${channel(122, .9)}" fill="#1f1f1f" shape-rendering="crispEdges"/>`;
```
